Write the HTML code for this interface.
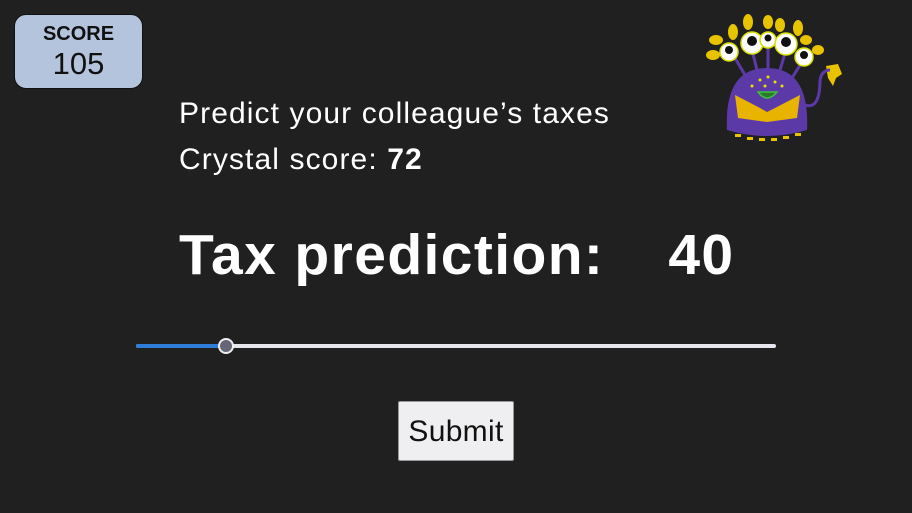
<!DOCTYPE html>
<html><head><meta charset="utf-8"><style>
html,body{margin:0;padding:0;background:#202020;width:912px;height:513px;overflow:hidden;font-family:"Liberation Sans",sans-serif;}
.abs{position:absolute;}
#score{left:14px;top:14px;width:127px;height:73px;background:#b4c4dc;border:1px solid #111;border-radius:12px;text-align:center;color:#111;}
#score .l{font-weight:bold;font-size:20px;margin-top:8px;}
#score .n{font-size:31px;margin-top:0px;}
.t{color:#fff;font-size:30px;letter-spacing:1.1px;left:179px;white-space:nowrap;}
#tax{color:#fff;font-weight:bold;font-size:57px;letter-spacing:1.4px;left:179px;top:222px;white-space:nowrap;}
#btn{left:398px;top:401px;width:114px;height:58px;background:#efeff1;border:1px solid #999;border-radius:2px;font-size:30px;letter-spacing:0.3px;color:#111;text-align:center;line-height:60px;}
</style></head><body>
<div id="score" class="abs"><div class="l">SCORE</div><div class="n">105</div></div>
<div class="abs t" style="top:97px">Predict your colleague’s taxes</div>
<div class="abs t" style="top:143px">Crystal score: <b>72</b></div>
<div id="tax" class="abs">Tax prediction:<span style="display:inline-block;width:64px"></span>40</div>
<div class="abs" style="left:136px;top:344px;width:640px;height:4px;background:#e6e6ec;border-radius:2px"></div>
<div class="abs" style="left:136px;top:344px;width:90px;height:4px;background:#2f7ddb;border-radius:2px"></div>
<div class="abs" style="left:218px;top:338px;width:12px;height:12px;background:#666677;border:2px solid #eee;border-radius:50%"></div>
<div id="btn" class="abs">Submit</div>
<svg class="abs" style="left:700px;top:5px" width="150" height="145" viewBox="700 5 150 145">
<g fill="#e8c300">
<ellipse cx="716" cy="40" rx="7" ry="5"/><ellipse cx="713" cy="55" rx="7" ry="5"/>
<ellipse cx="733" cy="32" rx="5" ry="8"/><ellipse cx="748" cy="22" rx="5" ry="8"/>
<ellipse cx="768" cy="22" rx="5" ry="7"/><ellipse cx="780" cy="25" rx="5" ry="7"/>
<ellipse cx="798" cy="28" rx="5" ry="8"/><ellipse cx="806" cy="40" rx="6" ry="5"/><ellipse cx="818" cy="50" rx="6" ry="5"/>
<path d="M826 66 L838 64 L842 74 L836 78 L833 86 L828 78 Z"/>
</g>
<g stroke="#5b3aa8" stroke-width="3" fill="none">
<path d="M735 58 L745 75"/><path d="M752 50 L757 70"/><path d="M768 46 L768 68"/><path d="M786 50 L780 70"/><path d="M802 62 L792 78"/>
<path d="M805 105 Q820 110 820 80 Q822 70 830 70"/>
</g>
<path d="M727 130 Q724 68 767 68 Q810 68 807 130 Q767 142 727 130Z" fill="#5b3aa8"/>
<path d="M735 95 L760 108 L767 112 L775 108 L800 95 L797 118 L767 122 L738 118 Z" fill="#e8b400"/>
<path d="M758 92 Q767 104 777 92 Z" fill="#2b7a2b" stroke="#40c040" stroke-width="1.5"/>
<g fill="#e8e000"><circle cx="760" cy="80" r="1.5"/><circle cx="768" cy="77" r="1.5"/><circle cx="775" cy="82" r="1.5"/><circle cx="752" cy="86" r="1.5"/><circle cx="782" cy="86" r="1.5"/><circle cx="765" cy="86" r="1.5"/></g>
<g fill="#e8c300"><rect x="735" y="134" width="6" height="3"/><rect x="747" y="137" width="6" height="3"/><rect x="759" y="138" width="6" height="3"/><rect x="771" y="138" width="6" height="3"/><rect x="783" y="136" width="6" height="3"/><rect x="795" y="133" width="6" height="3"/></g>
<g stroke="#d8e000" stroke-width="1.5" fill="#fff">
<circle cx="729" cy="52" r="9"/><circle cx="752" cy="43" r="11"/><circle cx="768" cy="40" r="8"/><circle cx="786" cy="44" r="11"/><circle cx="804" cy="57" r="9"/>
</g>
<g fill="#111"><circle cx="729" cy="50" r="4"/><circle cx="752" cy="41" r="5"/><circle cx="768" cy="38" r="3.5"/><circle cx="786" cy="42" r="5"/><circle cx="804" cy="55" r="4"/></g>
</svg>
</body></html>
